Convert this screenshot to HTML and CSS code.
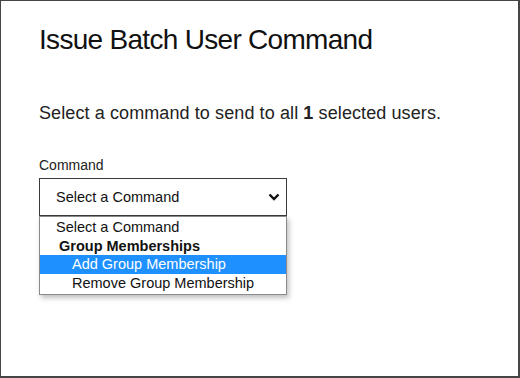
FILE: index.html
```html
<!DOCTYPE html>
<html>
<head>
<meta charset="utf-8">
<link rel="stylesheet" href="styles.css">
</head>
<body>
<div class="frame">
  <h1 class="title">Issue Batch User Command</h1>
  <p class="lead">Select a command to send to all <b>1</b> selected users.</p>
  <label class="label">Command</label>
  <div class="field">
    <div class="select">
      <span>Select a Command</span>
      <svg class="chev" width="12" height="8" viewBox="0 0 12 8"><path d="M1.5 1.5 L6 6 L10.5 1.5" fill="none" stroke="#111" stroke-width="2.4"/></svg>
    </div>
    <ul class="menu">
      <li class="opt">Select a Command</li>
      <li class="group">Group Memberships</li>
      <li class="opt sub active">Add Group Membership</li>
      <li class="opt sub">Remove Group Membership</li>
    </ul>
  </div>
</div>
</body>
</html>
```

FILE: styles.css
```css
html, body {
  margin: 0;
  padding: 0;
  background: #fff;
}
.frame {
  box-sizing: border-box;
  width: 520px;
  height: 378px;
  border-style: solid;
  border-color: #454545;
  border-width: 1px 2px 2px 1px;
  padding: 0 0 0 38px;
  font-family: "Liberation Sans", Arial, sans-serif;
  color: #161616;
}
.title {
  margin: 0;
  padding-top: 23px;
  font-size: 28px;
  line-height: 32px;
  font-weight: normal;
  letter-spacing: -0.7px;
  color: #111;
}
.lead {
  margin: 0;
  padding-top: 46px;
  font-size: 18px;
  line-height: 22px;
  letter-spacing: 0.1px;
  color: #222;
}
.lead b {
  font-weight: bold;
}
.label {
  display: block;
  padding-top: 32px;
  font-size: 14px;
  line-height: 18px;
  color: #222;
}
.field {
  position: relative;
  width: 248px;
  margin-top: 4px;
}
.select {
  box-sizing: border-box;
  height: 38px;
  border: 1px solid #3a3a3a;
  display: flex;
  align-items: center;
  justify-content: space-between;
  padding: 0 6px 0 16px;
  font-family: Arial, "Liberation Sans", sans-serif;
  font-size: 14.5px;
  color: #111;
  background: #fff;
}
.chev {
  display: block;
}
.menu {
  position: absolute;
  left: 0;
  top: 38px;
  width: 248px;
  box-sizing: border-box;
  margin: 0;
  padding: 1px 0 2px;
  list-style: none;
  border: 1px solid #8a8a8a;
  background: #fff;
  box-shadow: 2px 3px 5px rgba(0, 0, 0, 0.25);
  font-family: Arial, "Liberation Sans", sans-serif;
  font-size: 14.5px;
  color: #111;
}
.menu li {
  height: 18.5px;
  line-height: 18px;
  padding-left: 16px;
}
.menu .group {
  font-weight: bold;
  padding-left: 19px;
}
.menu .sub {
  padding-left: 32px;
}
.menu .active {
  background: #1e90ff;
  color: #fff;
}
```
